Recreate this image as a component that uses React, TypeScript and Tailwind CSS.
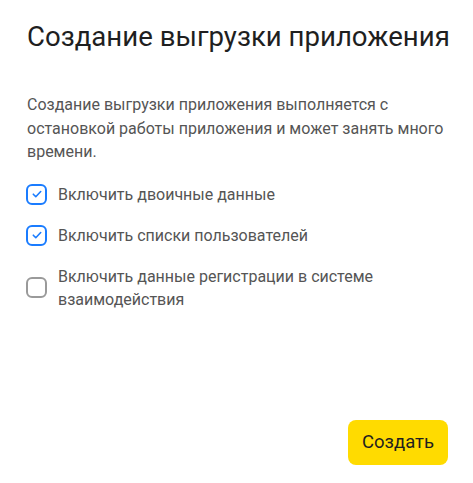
import { useState } from "react";

const options = [
  { id: "binary", label: "Включить двоичные данные", checked: true },
  { id: "users", label: "Включить списки пользователей", checked: true },
  {
    id: "log",
    label: "Включить данные регистрации в системе взаимодействия",
    checked: false,
  },
];

function Checkbox({
  label,
  checked,
  onChange,
}: {
  label: string;
  checked: boolean;
  onChange: () => void;
}) {
  return (
    <label className="flex items-center gap-[11px] cursor-pointer">
      <span
        onClick={onChange}
        className={
          "flex h-[21px] w-[21px] shrink-0 items-center justify-center rounded-[6px] border-2 " +
          (checked ? "border-[#1a7cff]" : "border-[#9a9a9a]")
        }
      >
        {checked && (
          <svg width="12" height="12" viewBox="0 0 12 12" fill="none">
            <path
              d="M2.3 6.2l2.5 2.5 4.9-5.2"
              stroke="#1a7cff"
              strokeWidth="1.6"
              strokeLinecap="round"
              strokeLinejoin="round"
            />
          </svg>
        )}
      </span>
      <span className="text-[16px] leading-[23px] text-[#555555] max-w-[340px]">
        {label}
      </span>
    </label>
  );
}

export default function App() {
  const [values, setValues] = useState(options.map((o) => o.checked));

  return (
    <div
      className="flex h-[483px] w-[473px] flex-col bg-white px-[27px] pt-[19px] pb-[18px]"
      style={{ fontFamily: "Roboto, sans-serif" }}
    >
      <h1 className="whitespace-nowrap text-[27.6px] leading-[36px] text-[#1f1f1f]">
        Создание выгрузки приложения
      </h1>
      <p className="mt-[38px] text-[16px] leading-[23.5px] text-[#555555]">
        Создание выгрузки приложения выполняется с остановкой работы приложения
        и может занять много времени.
      </p>
      <div className="mt-[19px] flex flex-col gap-[18px] -ml-[1px]">
        {options.map((o, i) => (
          <Checkbox
            key={o.id}
            label={o.label}
            checked={values[i]}
            onChange={() =>
              setValues(values.map((v, j) => (j === i ? !v : v)))
            }
          />
        ))}
      </div>
      <div className="mt-auto flex justify-end -mr-[2px]">
        <button className="h-[45px] rounded-[8px] bg-[#ffdb00] px-[14px] text-[18.5px] text-[#1f1f1f]">
          Создать
        </button>
      </div>
    </div>
  );
}
